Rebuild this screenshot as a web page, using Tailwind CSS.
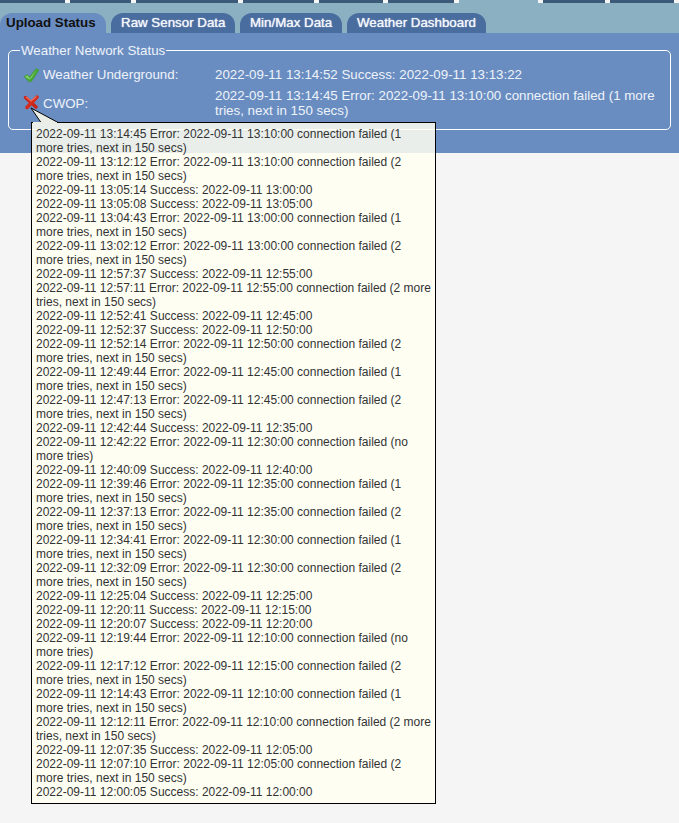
<!DOCTYPE html>
<html lang="en">
  <head>
    <meta charset="UTF-8">
    <title>Upload Status</title>
    <script src="https://cdn.jsdelivr.net/npm/@tailwindcss/browser@4"></script>
  </head>

  <body class="relative h-[823px] overflow-hidden bg-[#f5f5f5] font-['Liberation_Sans',Arial,sans-serif] text-xs">
    <!-- top nav strip -->
    <nav class="flex h-[3px] gap-[5px]">
      <a class="w-[65px] bg-[#3a5a78]"></a>
      <a class="w-[61px] bg-[#3a5a78]"></a>
      <a class="w-[102px] bg-[#3a5a78]"></a>
      <a class="w-[71px] bg-[#3a5a78]"></a>
      <a class="w-[64px] bg-[#3a5a78]"></a>
      <a class="w-[66px] bg-[#3a5a78]"></a>
      <a class="w-[79px] bg-[#8ab0c2]"></a>
      <a class="w-[62px] bg-[#3a5a78]"></a>
      <a class="w-[64px] bg-[#3a5a78]"></a>
    </nav>

    <!-- tabs -->
    <div class="flex h-[30px] items-end gap-[5px] bg-[#8ab0c2]">
      <a class="flex h-[20px] w-[106px] items-center rounded-t-xl bg-[#6a8dc1] pl-[6px] text-[13.33px] font-bold text-[#111]">Upload Status</a>
      <a class="flex h-[20px] w-[124px] items-center rounded-t-xl bg-[#4a6d9f] pl-[10px] text-[13.33px] text-[#f2f6fc] [text-shadow:0_0_1px_#fff]">Raw Sensor Data</a>
      <a class="flex h-[20px] w-[102px] items-center rounded-t-xl bg-[#4a6d9f] pl-[10px] text-[13.33px] text-[#f2f6fc] [text-shadow:0_0_1px_#fff]">Min/Max Data</a>
      <a class="flex h-[20px] w-[139px] items-center rounded-t-xl bg-[#4a6d9f] pl-[10px] text-[13.33px] text-[#f2f6fc] [text-shadow:0_0_1px_#fff]">Weather Dashboard</a>
    </div>

    <!-- panel -->
    <main class="h-[120px] bg-[#6a8dc1] px-[8px] pt-[10px] text-[13.33px] text-[#eef3fa]">
      <fieldset class="h-[87px] rounded-[5px] border border-white pl-[12px] pr-[8px]">
        <legend class="ml-[-1px] px-[1px] leading-[15px]">Weather Network Status</legend>
        <div class="mt-[6px] flex h-[21px] items-center">
          <svg class="mr-[4px] ml-[2px] h-[16px] w-[16px]" viewBox="0 0 16 16">
            <path d="M1 9.5 L4.5 7.5 L6.5 10 L13 1.5 L16 3 L8.5 14.5 L5.5 14.5 Z" fill="#45a836" stroke="#3a9430" stroke-width=".5"/>
            <path d="M2 9.5 L4.5 8.5 L6.5 11.5 L13.5 3 L9 10 L6.5 12.5 Z" fill="#8fd474"/>
          </svg>
          <span class="w-[172px]">Weather Underground:</span>
          <span>2022-09-11 13:14:52 Success: 2022-09-11 13:13:22</span>
        </div>
        <div class="mt-[3px] flex items-start">
          <svg class="mt-[6px] mr-[4px] ml-[2px] h-[16px] w-[16px]" viewBox="0 0 16 16">
            <path d="M2.5 3.5 L13 13" stroke="#c92318" stroke-width="3.5" stroke-linecap="round"/>
            <path d="M14 3 L4 13.5" stroke="#d42a1c" stroke-width="3.5" stroke-linecap="round"/>
            <path d="M3 3 L8 7 L13.5 2.5" stroke="#f0705c" stroke-width="1.2" fill="none"/>
          </svg>
          <span class="w-[172px] pt-[7px]">CWOP:</span>
          <span class="w-[445px] leading-[15px]">2022-09-11 13:14:45 Error: 2022-09-11 13:10:00 connection failed (1 more tries, next in 150 secs)</span>
        </div>
      </fieldset>
    </main>

    <!-- tooltip arrow -->
    <svg class="absolute top-[107px] left-[30px] z-20 h-[17px] w-[32px]" viewBox="0 0 32 17">
      <path d="M1 1 L11 15.5 L28 15.5 Z" fill="#e9ede5" stroke="#000" stroke-width="1"/>
      <path d="M3 15 H27 V17 H3 Z" fill="#e9ede5"/>
    </svg>

    <!-- upload log tooltip -->
    <div class="absolute top-[122px] left-[31px] z-10 w-[405px] border border-black bg-[#fffff2]/85 p-[4px] leading-[14px] text-[#333]">
      <div>2022-09-11 13:14:45 Error: 2022-09-11 13:10:00 connection failed (1 more tries, next in 150 secs)</div>
      <div>2022-09-11 13:12:12 Error: 2022-09-11 13:10:00 connection failed (2 more tries, next in 150 secs)</div>
      <div>2022-09-11 13:05:14 Success: 2022-09-11 13:00:00</div>
      <div>2022-09-11 13:05:08 Success: 2022-09-11 13:05:00</div>
      <div>2022-09-11 13:04:43 Error: 2022-09-11 13:00:00 connection failed (1 more tries, next in 150 secs)</div>
      <div>2022-09-11 13:02:12 Error: 2022-09-11 13:00:00 connection failed (2 more tries, next in 150 secs)</div>
      <div>2022-09-11 12:57:37 Success: 2022-09-11 12:55:00</div>
      <div>2022-09-11 12:57:11 Error: 2022-09-11 12:55:00 connection failed (2 more tries, next in 150 secs)</div>
      <div>2022-09-11 12:52:41 Success: 2022-09-11 12:45:00</div>
      <div>2022-09-11 12:52:37 Success: 2022-09-11 12:50:00</div>
      <div>2022-09-11 12:52:14 Error: 2022-09-11 12:50:00 connection failed (2 more tries, next in 150 secs)</div>
      <div>2022-09-11 12:49:44 Error: 2022-09-11 12:45:00 connection failed (1 more tries, next in 150 secs)</div>
      <div>2022-09-11 12:47:13 Error: 2022-09-11 12:45:00 connection failed (2 more tries, next in 150 secs)</div>
      <div>2022-09-11 12:42:44 Success: 2022-09-11 12:35:00</div>
      <div>2022-09-11 12:42:22 Error: 2022-09-11 12:30:00 connection failed (no more tries)</div>
      <div>2022-09-11 12:40:09 Success: 2022-09-11 12:40:00</div>
      <div>2022-09-11 12:39:46 Error: 2022-09-11 12:35:00 connection failed (1 more tries, next in 150 secs)</div>
      <div>2022-09-11 12:37:13 Error: 2022-09-11 12:35:00 connection failed (2 more tries, next in 150 secs)</div>
      <div>2022-09-11 12:34:41 Error: 2022-09-11 12:30:00 connection failed (1 more tries, next in 150 secs)</div>
      <div>2022-09-11 12:32:09 Error: 2022-09-11 12:30:00 connection failed (2 more tries, next in 150 secs)</div>
      <div>2022-09-11 12:25:04 Success: 2022-09-11 12:25:00</div>
      <div>2022-09-11 12:20:11 Success: 2022-09-11 12:15:00</div>
      <div>2022-09-11 12:20:07 Success: 2022-09-11 12:20:00</div>
      <div>2022-09-11 12:19:44 Error: 2022-09-11 12:10:00 connection failed (no more tries)</div>
      <div>2022-09-11 12:17:12 Error: 2022-09-11 12:15:00 connection failed (2 more tries, next in 150 secs)</div>
      <div>2022-09-11 12:14:43 Error: 2022-09-11 12:10:00 connection failed (1 more tries, next in 150 secs)</div>
      <div>2022-09-11 12:12:11 Error: 2022-09-11 12:10:00 connection failed (2 more tries, next in 150 secs)</div>
      <div>2022-09-11 12:07:35 Success: 2022-09-11 12:05:00</div>
      <div>2022-09-11 12:07:10 Error: 2022-09-11 12:05:00 connection failed (2 more tries, next in 150 secs)</div>
      <div>2022-09-11 12:00:05 Success: 2022-09-11 12:00:00</div>
    </div>
  </body>
</html>
